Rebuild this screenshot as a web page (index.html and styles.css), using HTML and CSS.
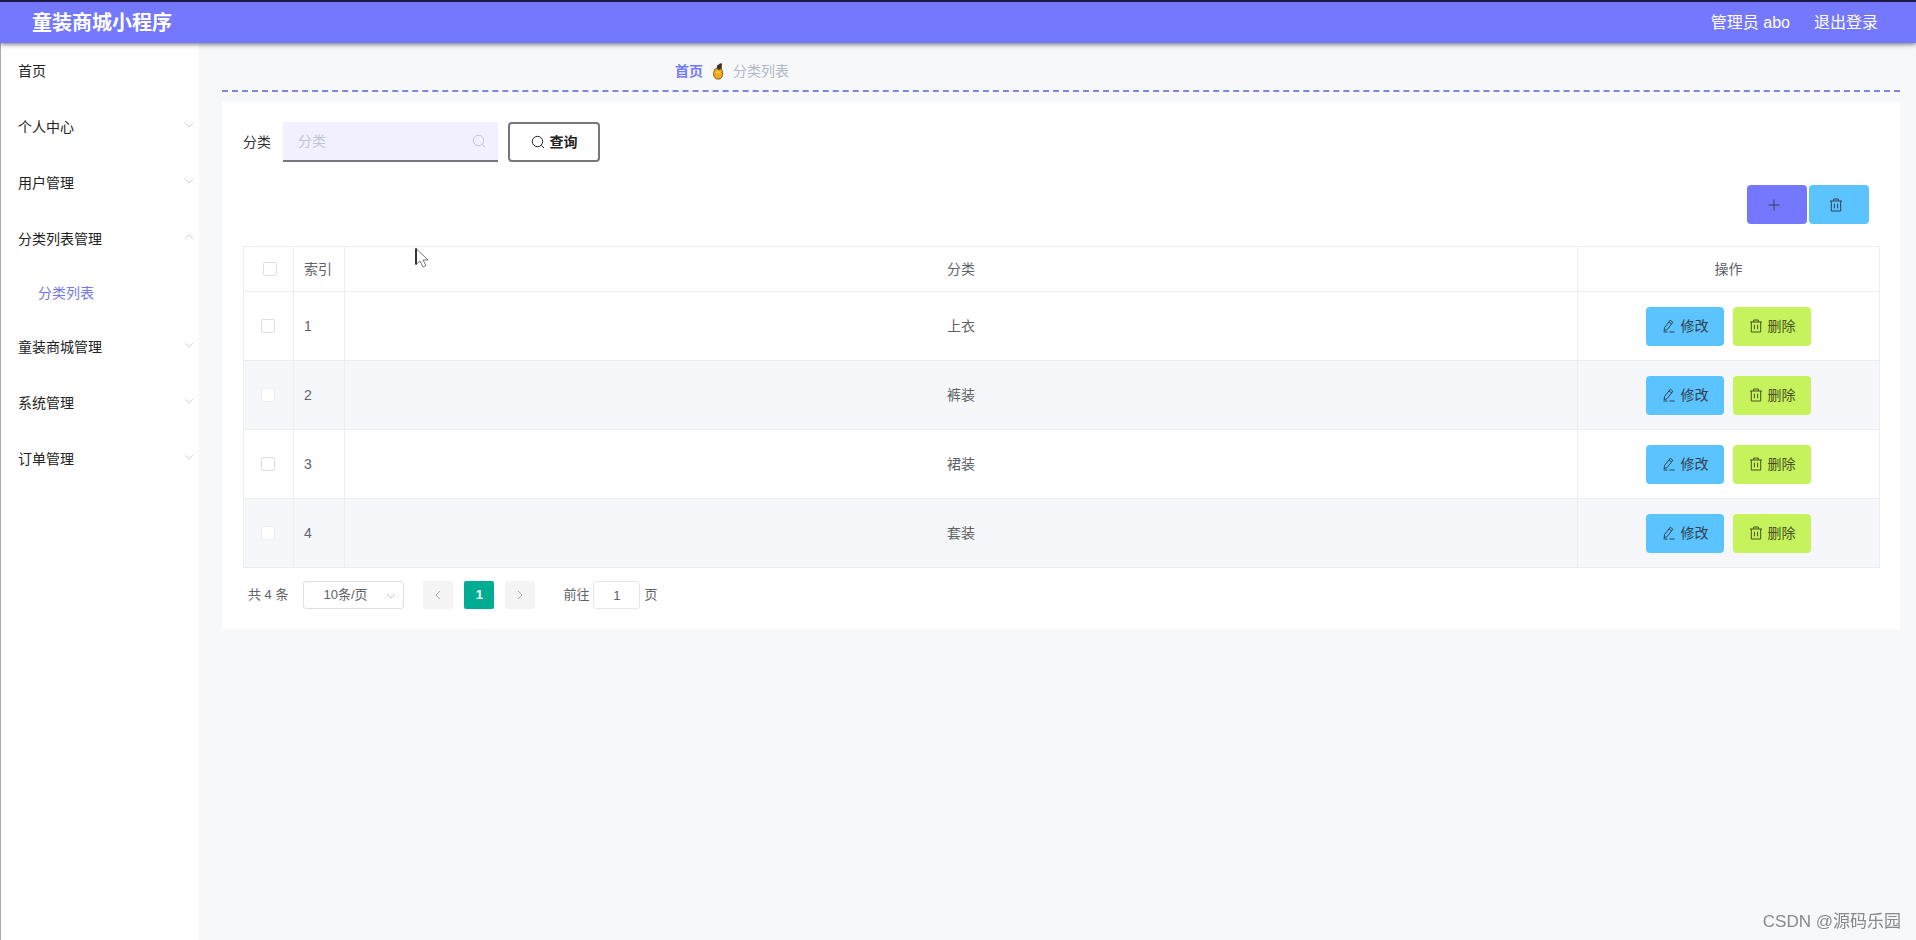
FILE: index.html
```html
<!DOCTYPE html>
<html lang="zh-CN">
<head>
<meta charset="utf-8">
<title>童装商城小程序</title>
<link rel="stylesheet" href="styles.css">
</head>
<body>
<svg class="defs" aria-hidden="true">
  <symbol id="down" viewBox="0 0 10 10"><path d="M1 3l4 4 4-4"/></symbol>
  <symbol id="up" viewBox="0 0 10 10"><path d="M1 7l4-4 4 4"/></symbol>
  <symbol id="left" viewBox="0 0 10 10"><path d="M7 1L3 5l4 4"/></symbol>
  <symbol id="right" viewBox="0 0 10 10"><path d="M3 1l4 4-4 4"/></symbol>
  <symbol id="search" viewBox="0 0 14 14"><circle cx="6.5" cy="6.5" r="5.2"/><path d="M10.3 10.3l2.7 2.7"/></symbol>
  <symbol id="plus" viewBox="0 0 14 14"><path d="M7 1.5v11M1.5 7h11"/></symbol>
  <symbol id="trash" viewBox="0 0 14 14"><path d="M1 3h12M4.7 3V1h4.6v2M2.3 3v10h9.4V3M5.4 5.7v4.6M8.6 5.7v4.6"/></symbol>
  <symbol id="edit" viewBox="0 0 14 14"><path d="M2.5 8.6L8.3 1.2l2.6 2-5.8 7.4-3 1.1zM7 2.9l2.6 2M1.5 13h4M7.5 13h5"/></symbol>
</svg>
<header class="topbar">
  <h1 class="brand">童装商城小程序</h1>
  <div class="account"><span>管理员 abo</span><a class="logout" href="#">退出登录</a></div>
</header>
<div class="shell">
  <nav class="sidebar">
    <a class="item" href="#">首页</a>
    <a class="item" href="#">个人中心<svg class="arrow"><use href="#down"/></svg></a>
    <a class="item" href="#">用户管理<svg class="arrow"><use href="#down"/></svg></a>
    <a class="item" href="#">分类列表管理<svg class="arrow"><use href="#up"/></svg></a>
    <a class="item sub" href="#">分类列表</a>
    <a class="item" href="#">童装商城管理<svg class="arrow"><use href="#down"/></svg></a>
    <a class="item" href="#">系统管理<svg class="arrow"><use href="#down"/></svg></a>
    <a class="item" href="#">订单管理<svg class="arrow"><use href="#down"/></svg></a>
  </nav>
  <main class="main">
    <div class="crumbs">
      <a class="home" href="#">首页</a>
      <svg class="hand" viewBox="0 0 14 18"><path d="M6 3.500L10 1l1 1-.5 6H6z" fill="#3f3527"/><path d="M3.500 7.500L6 6l1.500 2 3-1.500 1 3.500c.5 3-.5 6-2.500 7H5.500C3.500 16 2.500 14 2.500 11.500z" fill="#f5a81c" stroke="#7a5524" stroke-width=".9"/><path d="M5 11c1-1.500 2.500-1.500 3.500 0" fill="none" stroke="#ffd35a" stroke-width="1.500"/></svg>
      <span class="here">分类列表</span>
    </div>
    <section class="card">
      <form class="search">
        <label for="kind">分类</label>
        <span class="field"><input id="kind" type="text" placeholder="分类"><svg class="icon"><use href="#search"/></svg></span>
        <button class="query" type="button"><svg class="icon"><use href="#search"/></svg>查询</button>
      </form>
      <div class="tools">
        <button class="tool add" type="button" aria-label="新增"><svg class="icon"><use href="#plus"/></svg></button>
        <button class="tool blue" type="button" aria-label="批量删除"><svg class="icon"><use href="#trash"/></svg></button>
      </div>
      <table class="grid">
        <colgroup><col class="c-check"><col class="c-index"><col><col class="c-ops"></colgroup>
        <thead><tr><th class="check head"><input type="checkbox" aria-label="全选"></th><th class="index">索引</th><th>分类</th><th>操作</th></tr></thead>
        <tbody>
          <tr><td class="check"><input type="checkbox" aria-label="选择 1"></td><td class="index">1</td><td>上衣</td><td><div class="ops"><button class="op blue" type="button"><svg class="icon"><use href="#edit"/></svg>修改</button><button class="op lime" type="button"><svg class="icon"><use href="#trash"/></svg>删除</button></div></td></tr>
          <tr><td class="check"><input type="checkbox" aria-label="选择 2"></td><td class="index">2</td><td>裤装</td><td><div class="ops"><button class="op blue" type="button"><svg class="icon"><use href="#edit"/></svg>修改</button><button class="op lime" type="button"><svg class="icon"><use href="#trash"/></svg>删除</button></div></td></tr>
          <tr><td class="check"><input type="checkbox" aria-label="选择 3"></td><td class="index">3</td><td>裙装</td><td><div class="ops"><button class="op blue" type="button"><svg class="icon"><use href="#edit"/></svg>修改</button><button class="op lime" type="button"><svg class="icon"><use href="#trash"/></svg>删除</button></div></td></tr>
          <tr><td class="check"><input type="checkbox" aria-label="选择 4"></td><td class="index">4</td><td>套装</td><td><div class="ops"><button class="op blue" type="button"><svg class="icon"><use href="#edit"/></svg>修改</button><button class="op lime" type="button"><svg class="icon"><use href="#trash"/></svg>删除</button></div></td></tr>
        </tbody>
      </table>
      <div class="pager">
        <span>共 4 条</span>
        <span class="size"><select aria-label="每页条数"><option>10条/页</option></select><svg class="arrow"><use href="#down"/></svg></span>
        <div class="pages">
          <button class="page" type="button" aria-label="上一页"><svg class="arrow"><use href="#left"/></svg></button>
          <button class="page current" type="button">1</button>
          <button class="page" type="button" aria-label="下一页"><svg class="arrow"><use href="#right"/></svg></button>
        </div>
        <label class="jump">前往<input type="text" value="1">页</label>
      </div>
    </section>
  </main>
</div>
<svg class="pointer" viewBox="0 0 14 20" aria-hidden="true"><path d="M1 1v16l4-3.500 3 6 3-1.500-3-5.500h5z" fill="#fff" stroke="#777"/><path d="M1 1v16" stroke="#333" stroke-width="2"/></svg>
<div class="watermark">CSDN @源码乐园</div>
</body>
</html>
```
FILE: styles.css
```css
* { box-sizing: border-box; }
body {
  margin: 0;
  min-height: 100vh;
  display: flex;
  flex-direction: column;
  background: #f6f8fa;
  color: #333;
  font: 14px/20px "Liberation Sans", "Noto Sans CJK SC", sans-serif;
}
a { color: inherit; text-decoration: none; }
button, input, select { font: inherit; color: inherit; margin: 0; }
.defs { position: absolute; width: 0; height: 0; }
.icon, .arrow { fill: none; stroke: currentColor; flex: none; }
.icon { width: 14px; height: 14px; }
.arrow { width: 10px; height: 10px; }

.topbar {
  position: relative;
  display: flex;
  justify-content: space-between;
  align-items: center;
  height: 43px;
  padding: 0 38px 0 32px;
  border-top: 2px solid #1d1b45;
  background: #7478ff;
  color: #fff;
  box-shadow: 0 1px 5px #00000099;
}
.brand { margin: 0; font-size: 20px; line-height: 40px; font-weight: 700; }
.account { display: flex; gap: 24px; font-size: 16px; }

.shell { flex: 1; display: flex; }
.sidebar {
  width: 199px;
  flex: none;
  background: #fff;
  border-left: 1px solid #aaa;
}
.item {
  display: flex;
  align-items: center;
  justify-content: space-between;
  height: 56px;
  padding: 0 5px 0 17px;
  color: #222;
}
.item .arrow { margin-bottom: 4px; color: #d4d4d4; }
.item.sub { height: 52px; padding-left: 37px; color: #7478e8; }

.main { flex: 1; min-width: 0; padding: 0 16px 0 23px; }
.crumbs {
  display: flex;
  align-items: center;
  gap: 8px;
  height: 49px;
  padding: 8px 0 0 27%;
  border-bottom: 2px dashed #8084dc;
}
.home { color: #7478ff; font-weight: 700; }
.hand { width: 14px; height: 18px; }
.here { color: #b0b8c6; }

.card { margin-top: 10px; padding: 20px 20px 20px 21px; background: #fff; }
.search { display: flex; align-items: center; gap: 10px; height: 40px; }
.search label { margin-right: 2px; }
.field {
  display: flex;
  align-items: center;
  width: 215px;
  height: 40px;
  padding: 0 12px 0 15px;
  background: #f2f0ff;
  border-bottom: 2px solid #77757f;
  color: #c0c4cc;
}
.field input { flex: 1; min-width: 0; border: 0; padding: 0; background: none; color: #606266; outline: 0; }
.field input::placeholder { color: #c0c4cc; }
.query {
  display: flex;
  align-items: center;
  justify-content: center;
  gap: 5px;
  width: 92px;
  height: 40px;
  padding: 0;
  background: #fff;
  border: 2px solid #777;
  border-radius: 4px;
  color: #222;
  font-weight: 700;
}
.tools { display: flex; justify-content: flex-end; gap: 2px; padding: 23px 11px 22px 0; }
.tool, .op {
  display: flex;
  align-items: center;
  justify-content: center;
  height: 39px;
  padding: 0;
  border: 0;
  border-radius: 4px;
  color: #304050;
}
.tool { width: 60px; padding-right: 6px; }
.add { background: #7478ff; }
.blue { background: #5bc4ff; }
.lime { background: #c6f25c; color: #465022; }

.grid {
  width: 100%;
  table-layout: fixed;
  border-collapse: separate;
  border-spacing: 0;
  border-top: 1px solid #ebeef5;
  border-left: 1px solid #ebeef5;
  color: #606266;
}
.c-check { width: 50px; }
.c-index { width: 51px; }
.c-ops { width: 302px; }
.grid th, .grid td {
  padding: 0;
  border-right: 1px solid #ebeef5;
  border-bottom: 1px solid #ebeef5;
  text-align: center;
  font-weight: 400;
}
.grid th { height: 45px; }
.grid td { height: 69px; }
.grid tbody tr:nth-child(even) { background: #f5f7fb; }
.grid .index { text-align: left; padding-left: 10px; }
.grid .check { padding-right: 2px; }
.grid .check.head { padding: 0 0 0 3px; }
.grid input {
  appearance: none;
  display: block;
  width: 14px;
  height: 14px;
  margin: 0 auto;
  border: 1px solid #dcdfe6;
  border-radius: 2px;
  background: #fff;
}
.grid tr:nth-child(even) input { border-color: #eceff4; }
.ops { display: flex; justify-content: center; gap: 9px; }
.op { width: 78px; gap: 5px; }

.pager {
  display: flex;
  align-items: center;
  padding: 13px 5px 0;
  color: #606266;
  font-size: 13px;
}
.size { position: relative; width: 101px; height: 28px; margin: 0 19px 0 15px; }
.size select {
  appearance: none;
  width: 100%;
  height: 100%;
  padding: 0 17px 0 0;
  border: 1px solid #dcdfe6;
  border-radius: 3px;
  background: #fff;
  text-align: center;
  text-align-last: center;
}
.size .arrow { position: absolute; right: 8px; top: 10px; color: #c0c4cc; }
.pages { display: flex; gap: 11px; }
.page {
  display: flex;
  align-items: center;
  justify-content: center;
  width: 30px;
  height: 28px;
  padding: 0;
  border: 0;
  border-radius: 2px;
  background: #f4f4f5;
  color: #aaa;
}
.current { background: #00ad92; color: #fff; font-weight: 700; }
.jump { display: flex; align-items: center; gap: 4px; margin-left: 28px; }
.jump input {
  width: 47px;
  height: 28px;
  padding: 0;
  border: 1px solid #e4e7ed;
  border-radius: 3px;
  text-align: center;
}
.pointer { position: absolute; left: 415px; top: 247px; width: 14px; height: 21px; }
.watermark { position: fixed; right: 15px; bottom: 7px; color: #888; font-size: 17px; line-height: 22px; }
```
